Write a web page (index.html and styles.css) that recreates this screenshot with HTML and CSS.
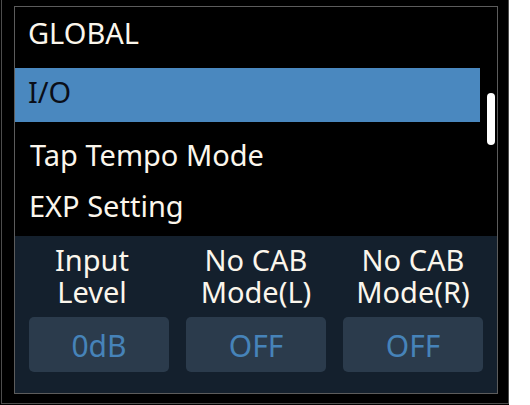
FILE: index.html
```html
<!DOCTYPE html>
<html>
<head>
<meta charset="utf-8">
<link rel="stylesheet" href="styles.css">
</head>
<body>
<div class="device">
  <div class="bezel">
    <div class="screen">
      <div class="list-area">
        <div class="rows">
          <div class="row header">GLOBAL</div>
          <div class="row selected">I/O</div>
          <div class="row tap">Tap Tempo Mode</div>
          <div class="row exp">EXP Setting</div>
        </div>
        <div class="scroll">
          <div class="thumb"></div>
        </div>
      </div>
      <div class="panel">
        <div class="col">
          <div class="label first"><div class="line">Input</div><div class="line">Level</div></div>
          <div class="value">0dB</div>
        </div>
        <div class="col">
          <div class="label"><div class="line">No CAB</div><div class="line">Mode(L)</div></div>
          <div class="value">OFF</div>
        </div>
        <div class="col">
          <div class="label"><div class="line">No CAB</div><div class="line">Mode(R)</div></div>
          <div class="value">OFF</div>
        </div>
      </div>
    </div>
  </div>
</div>
</body>
</html>
```
FILE: styles.css
```css
html, body {
  margin: 0;
  padding: 0;
  background: #ffffff;
}
body {
  width: 530px;
  height: 405px;
  overflow: hidden;
  font-family: "Noto Sans", "Open Sans", sans-serif;
}
.device {
  width: 509px;
  height: 405px;
  box-sizing: border-box;
  background: #000;
  padding: 0 0 1px 1px;
}
.bezel {
  height: 100%;
  box-sizing: border-box;
  border: 1px solid #4d4d4d;
  border-top: none;
  padding: 6px 0 0 12px;
}
.screen {
  width: 484px;
  height: 388px;
  box-sizing: border-box;
  border: 1px solid #5c5c5c;
  background: #000;
  display: flex;
  flex-direction: column;
}
.list-area {
  height: 229px;
  display: flex;
}
.rows {
  width: 465px;
  display: flex;
  flex-direction: column;
}
.row {
  font-size: 29px;
  line-height: 38px;
  color: #fbf6ec;
  box-sizing: border-box;
  padding-left: 13px;
}
.header {
  height: 61px;
  padding-top: 7px;
}
.selected {
  height: 54px;
  padding-top: 5px;
  background: #4a88bf;
  color: #0a0e18;
}
.tap {
  height: 58px;
  padding-top: 14px;
  padding-left: 15px;
}
.exp {
  height: 56px;
  padding-top: 7px;
  padding-left: 14px;
}
.scroll {
  flex: 1;
  padding: 86px 0 0 7px;
}
.thumb {
  width: 8px;
  height: 52px;
  border-radius: 4px;
  background: #ffffff;
}
.panel {
  flex: 1;
  background: #14202d;
  display: grid;
  grid-template-columns: 140px 140px 140px;
  column-gap: 17px;
  padding: 8px 13px 0 14px;
}
.col {
  display: flex;
  flex-direction: column;
  align-items: center;
}
.label {
  font-size: 29px;
  color: #fbf6ec;
  text-align: center;
  white-space: nowrap;
  height: 64px;
  display: flex;
  flex-direction: column;
  align-items: center;
}
.line {
  height: 32px;
  line-height: 32px;
}
.label.first {
  margin-right: 14px;
}
.value {
  margin-top: 9px;
  width: 140px;
  height: 55px;
  box-sizing: border-box;
  padding-top: 2px;
  line-height: 53px;
  font-size: 30px;
  text-align: center;
  color: #4683b9;
  background: #2b3b4c;
  border-radius: 5px;
}
```
